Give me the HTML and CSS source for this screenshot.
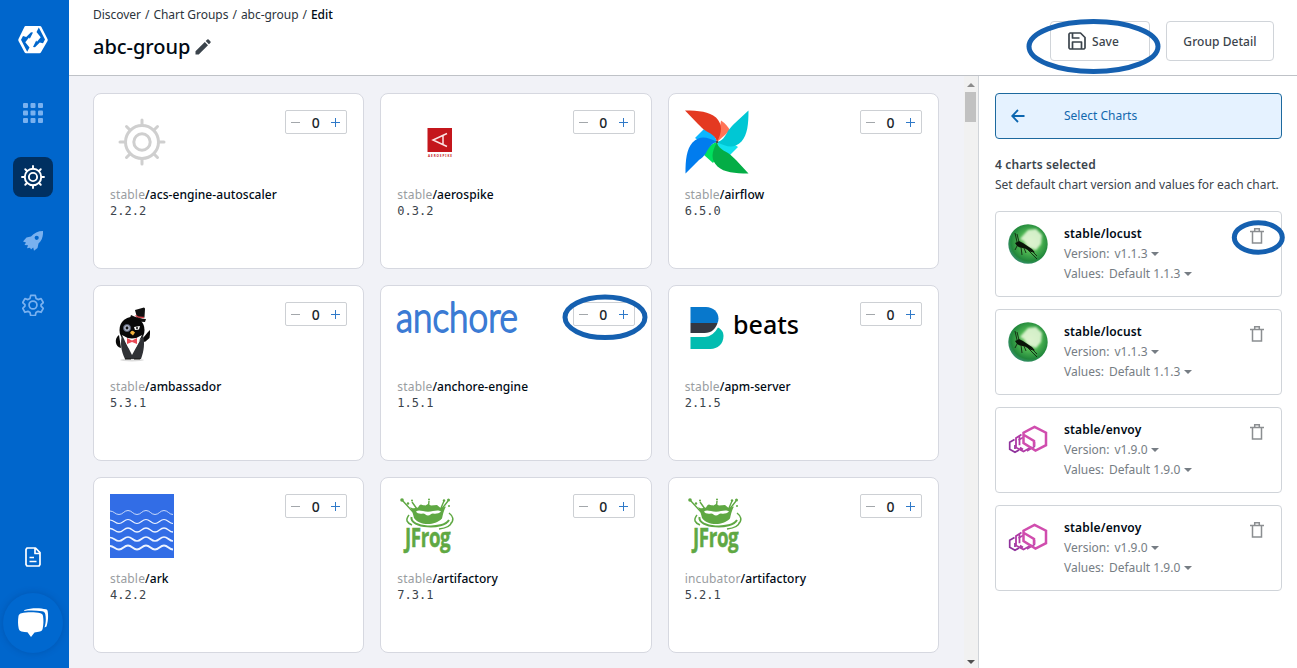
FILE: index.html
```html
<!DOCTYPE html>
<html lang="en">
<head>
<meta charset="utf-8">
<title>abc-group</title>
<link rel="stylesheet" href="styles.css">
</head>
<body>
<svg class="defs" width="0" height="0">
  <defs>
    <symbol id="helm" viewBox="0 0 48 48">
      <g fill="none" stroke="currentColor" stroke-linecap="round">
        <circle cx="24" cy="24" r="16.500"/>
        <circle cx="24" cy="24" r="8.200"/>
        <path d="M24 7V2M24 41v5M7 24H2M41 24h5M12 12L8.500 8.500M36 12l3.500-3.500M12 36l-3.500 3.500M36 36l3.500 3.500"/>
      </g>
    </symbol>
    <symbol id="trash" viewBox="0 0 14 18">
      <path fill="none" stroke="#8b8e91" stroke-width="1.500" d="M0 4.500h14M2.500 4.500v11.500h9V4.500M4.700 4.500V1.700h4.600v2.800"/>
    </symbol>
    <symbol id="locust" viewBox="0 0 40 40">
      <circle cx="20" cy="20" r="19.700" fill="url(#locustBall)"/>
      <path fill="#e3f6d6" opacity=".9" d="M12 15L20 6l8-1 6 6-1 9-5 6-8-3-4-6z" filter="url(#soft)"/>
      <path fill="#0a1408" d="M7 19l4-2 4 2 3 2 6 4 3 3.500-4-.5-6-3.500-5-1-3-1.500z"/>
      <path fill="none" stroke="#12260f" stroke-width=".9" d="M9 18L7 9M11 18l-2-8M13 23l1 8M16 24l2 5M20 26l9 9M23 26l6 6M9 22l-2 4"/>
    </symbol>
    <radialGradient id="locustBall" cx=".55" cy=".45" r=".6">
      <stop offset="0" stop-color="#a5dc8d"/><stop offset=".45" stop-color="#4db552"/>
      <stop offset=".8" stop-color="#22883b"/><stop offset="1" stop-color="#3d917c"/>
    </radialGradient>
    <filter id="soft"><feGaussianBlur stdDeviation="1.300"/></filter>
    <symbol id="envoy" viewBox="0 0 40 40">
      <g fill="none">
        <path stroke="#8f329c" stroke-width="1.700" d="M6.500 19.500L1.700 22.300v7L7 32.300l4-2.300M7 25v4"/>
        <path stroke="#b03aa5" stroke-width="1.800" d="M13.500 14.500L8 18v9.500l7.500 4 8-4.500M11.500 15.800v9.500M15 29.500l-3-2"/>
        <path stroke="#b142aa" stroke-width="1.500" d="M15 17.500l-4.500 2.500M26.500 22v4.500L19 31"/>
        <path stroke="#d04dae" stroke-width="2.500" d="M26.500 6.800L38 12.700v12.500L27.500 30.500 15.500 23V12.700zM16 15l10 6v5"/>
      </g>
    </symbol>
    <symbol id="frog" viewBox="0 0 64 64">
      <g fill="#5fa843">
        <path fill-rule="evenodd" d="M13 13c3 2 5 1 8 .5 1-2 2-3 3-3 2 1 3 .5 4.500 1l2.500-1.500 3 1.500c2 0 4-.5 6-.5l3 2.500c2 .5 4 0 6-1-2 3-3 8-4 12-4 4-9 5.500-14 5.500-6 0-11-2-14-6-1-4-2-8-4-11zM19 17.500c1 2 4 2.500 7 2 2 0 3 2 5 2s3-2 5-2c3 .5 6 0 8-2-2-1.500-5-1-8-.5-3 1-7 1-10 0-3-.5-5-1-7 .5z"/>
        <circle cx="5" cy="6" r="1.800"/><circle cx="11" cy="9.500" r="1.200"/><circle cx="15" cy="6.500" r="1"/><circle cx="32" cy="5.500" r="1"/><circle cx="47" cy="6.500" r="1.200"/><circle cx="51.500" cy="6" r="1.500"/><circle cx="52" cy="12" r="1"/>
      </g>
      <g fill="none" stroke="#5fa843">
        <path stroke-width="1.400" d="M5 6l11 12M15 8l5 7M32 7l-.5 5M51 7l-7 9M47 7l-3 7"/>
        <path stroke-width="2" d="M14.500 23c-2 11 32 13 37.500 3"/>
        <path stroke-width="1.500" d="M12 21c-4 5-2 8 3 10M42 35c8-1 12-3 12.500-7M52 19c4 3 5.500 7 1.500 11"/>
      </g>
      <text class="frog-word" transform="translate(8 53) scale(.72 1)">JFrog</text>
      <circle cx="53" cy="38" r=".6" fill="#5fa843"/>
    </symbol>
  </defs>
</svg>

<div class="app">
  <nav class="rail">
    <svg class="rail-logo" viewBox="0 0 30 28"><path fill="#fff" d="M7.500 0h14.500q.8 0 1.300.8L29.500 13q.5 1 0 2L23 26.300q-.5.900-1.500.900H8q-.8 0-1.300-.8L.5 15q-.5-1 0-2L6.500.8Q6.800 0 7.500 0z"/><path id="hook" fill="#0066cc" d="M20.800 1.600L27 13.600 25 17.300 21.800 16.500 17 21.200l-2-.3 3.200-6.300.8 1.200 3.700-4.600L18.500 6z"/><use href="#hook" transform="rotate(180 15 13.700)"/></svg>
    <svg class="rail-grid" viewBox="0 0 20 20" fill="#79b1ef"><rect width="5" height="5" rx="1"/><rect x="7.500" width="5" height="5" rx="1"/><rect x="15" width="5" height="5" rx="1"/><rect y="7.500" width="5" height="5" rx="1"/><rect x="7.500" y="7.500" width="5" height="5" rx="1"/><rect x="15" y="7.500" width="5" height="5" rx="1"/><rect y="15" width="5" height="5" rx="1"/><rect x="7.500" y="15" width="5" height="5" rx="1"/><rect x="15" y="15" width="5" height="5" rx="1"/></svg>
    <span class="rail-active"><svg viewBox="0 0 48 48"><use href="#helm"/></svg></span>
    <svg class="rail-rocket" viewBox="0 0 20 20"><path fill="#79b1ef" fill-rule="evenodd" d="M20 0c.3 5-1 9.500-4.500 12.500L14.500 17 11 19.700l-.8-3.200L8 18.500l-1-1.800-3 .6 1-3L1.500 14 3 11.500 0 10.600 3.500 6.500l4.500-1C11 2 15 0 20 0zm-6.300 4.700a2.100 2.100 0 1 0 0 4.200 2.100 2.100 0 0 0 0-4.200z"/></svg>
    <svg class="rail-gear" viewBox="0 0 24 24" fill="none" stroke="#79b1ef" stroke-width="1.900" stroke-linejoin="round"><circle cx="12" cy="12" r="4.300"/><path d="M9.500 1.500h5l.8 3.300 2.200 1.300 3.300-1 2.400 4.200-2.400 2.400v1.600l2.400 2.400-2.400 4.200-3.300-1-2.200 1.300-.8 3.300h-5l-.8-3.300-2.200-1.300-3.300 1-2.400-4.200 2.400-2.400v-1.600L.8 9.300l2.400-4.200 3.300 1 2.200-1.300z"/></svg>
    <svg class="rail-doc" viewBox="0 0 16 20" fill="none" stroke="#fff" stroke-width="1.700" stroke-linejoin="round"><path d="M2 1h8.500L15 5.700V17.500L14 19H2l-1-1.500V2.500zM10 1v5.500h5M4.500 10.500h4.500M4.500 14.500h7"/></svg>
    <span class="chat"><svg viewBox="0 0 32 30"><path fill="#fff" d="M7.500 2C14-.3 23-.3 29 1.300c1 .4 1.500 1 1.700 2C31.500 8.500 31 14 29.500 18.500l-2 1c1.500-5 1.600-9 .8-13.300C28 4.500 27 3.500 25 3.300 19 2.500 13 2.400 7 3z"/><path fill="#fff" d="M4.500 5.300C10 4 18 4 23.500 5.300c1.500.4 2.300 1.300 2.500 2.700.7 4.500.5 8.500-.3 12.500-.3 1.500-1 2.500-2.700 3-1.700.5-3.700.8-5.500.9L14 29l-3.500-4.700c-2 0-4-.3-6-.8-1.500-.4-2.500-1.500-2.800-3C.9 16.500.8 12.500 1.500 8 1.800 6.600 3 5.600 4.500 5.300z"/></svg></span>
  </nav>

  <div class="main">
    <header class="top">
      <div class="heading">
        <div class="crumbs"><span>Discover</span><i>/</i><span>Chart Groups</span><i>/</i><span>abc-group</span><i>/</i><b>Edit</b></div>
        <h1>abc-group<svg viewBox="0 0 16 16"><path fill="#3b444c" d="M.5 12.300L9.800 3l3.200 3.200-9.300 9.300H.5zM10.700 2.100L12.300.6q.7-.5 1.300 0l1.900 1.900q.5.600 0 1.300l-1.600 1.500z"/></svg></h1>
      </div>
      <div class="actions">
        <button class="btn save"><svg viewBox="0 0 18 18" fill="none" stroke="#3b444c" stroke-width="1.700" stroke-linejoin="round"><path d="M2 1h10.500L17 5.500V16l-1 1H2l-1-1V2zM4.500 17v-7h9v7M4.500 1v5h7"/></svg>Save</button>
        <button class="btn">Group Detail</button>
      </div>
    </header>

    <div class="body">
      <main class="charts">
        <article class="card">
          <div class="card-top"><svg class="logo gray" viewBox="-8 -8 64 64"><use href="#helm" width="48" height="48"/></svg><div class="stepper"><i class="minus"></i><span>0</span><i class="plus"></i></div></div>
          <h2><em>stable</em>/acs-engine-autoscaler</h2><p>2.2.2</p>
        </article>
        <article class="card">
          <div class="card-top"><svg class="logo wide" viewBox="0 0 86 64"><rect x="30.500" y="18" width="24.500" height="24" fill="#c4161c"/><path fill="none" stroke="#fbe3e3" stroke-width="1.500" d="M50 23.500L36 30l14 6.500M46 25.500v9"/><text class="aero" x="31" y="46.500" textLength="24">AEROSPIKE</text></svg><div class="stepper"><i class="minus"></i><span>0</span><i class="plus"></i></div></div>
          <h2><em>stable</em>/aerospike</h2><p>0.3.2</p>
        </article>
        <article class="card">
          <div class="card-top"><svg class="logo" viewBox="0 0 64 64"><path fill="#ff7457" d="M32 32L45 20.500q-3-6-9-10z"/><path fill="#11e1ee" d="M32 32c2 8 6 10 13 13l8-8-6-4z"/><path fill="#00e05e" d="M32 32c-7 2-10 6-13 13l9 8 4-6z"/><path fill="#0cb6ff" d="M32 32c-2-7-6-10-13-13l-9 9 6 4z"/><path fill="#e43921" d="M0 .5c14 0 24 1 31 7 7 7 6 15 1 24.500-1-5-5-8-11-11-3-2-5-4-8-7z"/><path fill="#00c7d4" d="M63.500.5c0 14-1 24-7 31-7 7-14 6-24.500.5 5-1 8-5 11-11 2-3 4-5 7-8z"/><path fill="#04ad46" d="M63.500 63.500c-14 0-24-1-31-7-7-7-6-14-.5-24.500 1 5 5 8 11 11 3 2 5 4 8 7z"/><path fill="#017cee" d="M.5 63.500c0-14 1-24 7-31 7-7 14-6 24.500-.5-5 1-8 5-11 11-2 3-4 5-7 7z"/><circle cx="32" cy="32" r="1.300" fill="#51504f"/></svg><div class="stepper"><i class="minus"></i><span>0</span><i class="plus"></i></div></div>
          <h2><em>stable</em>/airflow</h2><p>6.5.0</p>
        </article>

        <article class="card">
          <div class="card-top"><svg class="logo" viewBox="0 0 64 64"><ellipse cx="22" cy="58" rx="12" ry="1.500" fill="#ddd"/><path fill="#111" d="M25 8l9-2.500 1 1-.5 9-7 2z"/><path fill="#111" d="M21 13c4 2 10 4 15 4l-1 3c-5 0-11-1-15-4z"/><path fill="none" stroke="#d5424a" stroke-width="1.500" d="M25.500 13.500q3 2.500 8.500 2"/><ellipse cx="22" cy="28" rx="12.500" ry="13" fill="#080808"/><path fill="#090909" d="M9 33c-5 3-4 12 2 13zM33 36l5-6 2-2v4l-.5 4-4 3.500-4 1z"/><path fill="#303236" d="M12 33l10 20 11-20c2 8 1 16-2 24H15C11 49 10 41 12 33z"/><path fill="#fff" d="M12 33q10 7 20 0l-6 12-4 4-4-4z"/><path fill="#e94b57" d="M17 36l5 2.500 5-2.500v6l-5-2-5 2z"/><circle cx="17" cy="26" r="3.500" fill="#aeb5c8" stroke="#555c70"/><circle cx="17" cy="26" r="1.400" fill="#111"/><path fill="#fff" d="M24 25l6-1-1 3.500-4 .5z"/><circle cx="27" cy="26" r="1" fill="#111"/><path fill="#f4b43f" d="M20 31q2-4 5-.5l-2 3z"/><path fill="#222" d="M15 56h6v1.500h-6zM24 56h6v1.500h-6z"/></svg><div class="stepper"><i class="minus"></i><span>0</span><i class="plus"></i></div></div>
          <h2><em>stable</em>/ambassador</h2><p>5.3.1</p>
        </article>
        <article class="card">
          <div class="card-top"><svg class="logo anchore" viewBox="0 0 122 64"><text x="-1" y="30" textLength="122" lengthAdjust="spacingAndGlyphs">anchore</text></svg><div class="stepper"><i class="minus"></i><span>0</span><i class="plus"></i></div></div>
          <h2><em>stable</em>/anchore-engine</h2><p>1.5.1</p>
        </article>
        <article class="card">
          <div class="card-top"><svg class="logo beats" viewBox="0 0 122 64"><path fill="#0878cc" d="M5.500 5H21c7 0 12.500 5 12.500 11.500q0 2.500-1 4.500h-27z"/><path fill="#343741" d="M5.500 21h27c-2 6-6 10-13 10h-14z"/><path fill="#02bcb0" d="M5.500 35H20q8-.5 13-9.500c4 2 5.500 5 5.500 8.500 0 8-6 13-13 13h-20z"/><text x="48" y="32" textLength="66" lengthAdjust="spacingAndGlyphs">beats</text></svg><div class="stepper"><i class="minus"></i><span>0</span><i class="plus"></i></div></div>
          <h2><em>stable</em>/apm-server</h2><p>2.1.5</p>
        </article>

        <article class="card">
          <div class="card-top"><svg class="logo" viewBox="0 0 64 64"><path fill="#326de6" d="M0 0h64v64H0z"/><g fill="none" stroke="#eef4ff"><path stroke-width=".8" d="M0 17c4 0 5 3.500 9 3.500s5-4 9-4 5 4 9 4 5-4 9-4 5 4 9 4 5-4 9-4 5 4 9 4"/><path stroke-width="1.100" d="M0 26c4 0 5 3.500 9 3.500s5-4 9-4 5 4 9 4 5-4 9-4 5 4 9 4 5-4 9-4 5 4 9 4"/><path stroke-width="1.500" d="M0 34.500c4 0 5 3.500 9 3.500s5-4 9-4 5 4 9 4 5-4 9-4 5 4 9 4 5-4 9-4 5 4 9 4"/><path stroke-width="1.700" d="M0 43.500c4 0 5 3.500 9 3.500s5-4 9-4 5 4 9 4 5-4 9-4 5 4 9 4 5-4 9-4 5 4 9 4"/><path stroke-width="2" d="M0 52c4 0 5 3.500 9 3.500s5-4 9-4 5 4 9 4 5-4 9-4 5 4 9 4 5-4 9-4 5 4 9 4"/></g></svg><div class="stepper"><i class="minus"></i><span>0</span><i class="plus"></i></div></div>
          <h2><em>stable</em>/ark</h2><p>4.2.2</p>
        </article>
        <article class="card">
          <div class="card-top"><svg class="logo" viewBox="0 0 64 64"><use href="#frog"/></svg><div class="stepper"><i class="minus"></i><span>0</span><i class="plus"></i></div></div>
          <h2><em>stable</em>/artifactory</h2><p>7.3.1</p>
        </article>
        <article class="card">
          <div class="card-top"><svg class="logo" viewBox="0 0 64 64"><use href="#frog"/></svg><div class="stepper"><i class="minus"></i><span>0</span><i class="plus"></i></div></div>
          <h2><em>incubator</em>/artifactory</h2><p>5.2.1</p>
        </article>
      </main>

      <div class="scrollbar"><i class="up"></i><i class="thumb"></i><i class="down"></i></div>

      <aside class="panel">
        <button class="select"><svg viewBox="0 0 14 14"><path fill="none" stroke="#0b66b0" stroke-width="1.800" d="M13.500 7H1.500M7 1L1.200 7 7 13"/></svg>Select Charts</button>
        <h3>4 charts selected</h3>
        <p class="hint">Set default chart version and values for each chart.</p>
        <div class="picked">
          <section class="pick"><svg class="pick-logo"><use href="#locust"/></svg><div><h4>stable/locust</h4><p>Version:<span>v1.1.3</span></p><p>Values:<span>Default 1.1.3</span></p></div><svg class="trash"><use href="#trash"/></svg></section>
          <section class="pick"><svg class="pick-logo"><use href="#locust"/></svg><div><h4>stable/locust</h4><p>Version:<span>v1.1.3</span></p><p>Values:<span>Default 1.1.3</span></p></div><svg class="trash"><use href="#trash"/></svg></section>
          <section class="pick"><svg class="pick-logo"><use href="#envoy"/></svg><div><h4>stable/envoy</h4><p>Version:<span>v1.9.0</span></p><p>Values:<span>Default 1.9.0</span></p></div><svg class="trash"><use href="#trash"/></svg></section>
          <section class="pick"><svg class="pick-logo"><use href="#envoy"/></svg><div><h4>stable/envoy</h4><p>Version:<span>v1.9.0</span></p><p>Values:<span>Default 1.9.0</span></p></div><svg class="trash"><use href="#trash"/></svg></section>
        </div>
      </aside>
    </div>
  </div>
</div>
<svg class="marks" viewBox="0 0 1297 668">
  <ellipse cx="1093.500" cy="46.500" rx="64.500" ry="25"/>
  <ellipse cx="605" cy="317.300" rx="40" ry="20.300"/>
  <ellipse cx="1258.300" cy="237.500" rx="24" ry="14.700"/>
</svg>
</body>
</html>
```

FILE: styles.css
```css
* { box-sizing: border-box; }
body { margin: 0; font-family: "Noto Sans", "Open Sans", sans-serif; font-size: 12px; color: #3b444c; overflow: hidden; }
h1, h2, h3, h4, p { margin: 0; }
i, em { font-style: normal; }
svg { display: block; flex: none; }
button { font: inherit; }
.defs { position: absolute; }

.app { display: flex; height: 668px; }

/* navigation rail */
.rail { width: 69px; flex: none; background: #0066cc; display: flex; flex-direction: column; align-items: center; padding: 26px 4px 15px 0; }
.rail-logo { width: 30px; height: 28px; }
.rail-grid { width: 20px; height: 20px; margin-top: 49px; }
.rail-active { width: 40px; height: 40px; margin-top: 34px; border-radius: 8px; background: #003061; color: #fff; display: grid; place-items: center; }
.rail-active svg { width: 24px; height: 24px; stroke-width: 3.8px; }
.rail-rocket { width: 20px; height: 20px; margin-top: 34px; }
.rail-gear { width: 22px; height: 22px; margin-top: 43px; }
.rail-doc { width: 16px; height: 20px; margin-top: auto; }
.chat { width: 60px; height: 60px; margin-top: 26px; border-radius: 50%; background: #0068cf; box-shadow: 0 0 7px rgba(0, 40, 100, .25); display: grid; place-items: center; }
.chat svg { width: 32px; height: 30px; }

.main { flex: 1; min-width: 0; display: flex; flex-direction: column; }

/* header */
.top { height: 76px; flex: none; border-bottom: 1px solid #bfc2c7; display: flex; justify-content: space-between; padding: 6px 23px 0 24px; background: #fff; }
.crumbs { display: flex; gap: 4px; line-height: 17px; letter-spacing: -.03px; color: #2c343c; }
.crumbs b { font-weight: 500; color: #000a14; }
h1 { display: flex; align-items: center; gap: 5px; margin-top: 11px; font-size: 20px; line-height: 26px; font-weight: 500; letter-spacing: -.05px; color: #000a14; }
h1 svg { width: 16px; height: 16px; }
.actions { display: flex; gap: 16px; padding-top: 15px; }
.btn { width: 108px; height: 40px; padding: 0; background: #fff; border: 1px solid #d0d4d9; border-radius: 4px; font-weight: 500; letter-spacing: .06px; color: #3b444c; }
.save { width: 100px; display: flex; align-items: center; gap: 6px; padding-left: 17px; }
.save svg { width: 18px; height: 18px; }

.body { flex: 1; min-height: 0; display: flex; }

/* chart grid */
.charts { flex: 1; min-width: 0; background: #f1f2f7; display: grid; grid-template-columns: repeat(3, 1fr); grid-auto-rows: 176px; gap: 16px; padding: 17px 25px 0 24px; overflow: hidden; }
.card { background: #fff; border: 1px solid #d6d8e0; border-radius: 8px; padding: 16px; }
.card-top { display: flex; justify-content: space-between; align-items: flex-start; height: 64px; }
.logo { width: 64px; height: 64px; overflow: visible; }
.wide { width: 86px; }
.gray { color: #cfcfcf; stroke-width: 3px; }
.anchore, .beats { width: 122px; }
.anchore text { font: 300 41px Lato, sans-serif; fill: #3b7bd4; stroke: #3b7bd4; stroke-width: 1.8px; stroke-linejoin: round; }
.beats text { font: 500 25px "Noto Sans", sans-serif; fill: #000; }
.aero { font: 700 3px "Noto Sans", sans-serif; fill: #c4161c; }
.frog-word { font: 700 26px "Open Sans", sans-serif; fill: #5fa843; stroke: #5fa843; stroke-width: .5px; letter-spacing: -.5px; }
.card h2 { margin-top: 12px; font-size: 12px; line-height: 17px; font-weight: 500; letter-spacing: .06px; color: #000a14; }
.card em { font-weight: 400; letter-spacing: .17px; color: #999da1; }
.card p { font: 12px/16px "DejaVu Sans Mono", monospace; color: #3b444c; }
.stepper { width: 62px; height: 24px; border: 1px solid #cdd0d4; border-radius: 2px; display: flex; align-items: center; justify-content: space-between; padding: 0 6px 0 5px; font-size: 14px; font-weight: 500; line-height: 23px; color: #20262c; }
.minus { width: 9px; height: 1px; background: #a3a7ab; }
.plus { width: 9px; height: 9px; background: linear-gradient(#2f79c8, #2f79c8) center / 9px 1px no-repeat, linear-gradient(#2f79c8, #2f79c8) center / 1px 9px no-repeat; }

/* scrollbar */
.scrollbar { width: 14px; background: #f1f1f1; display: flex; flex-direction: column; align-items: center; padding: 7px 1px 4px 0; }
.up, .down { border: 4px solid transparent; border-top: 0; border-bottom-color: #8b8b8b; }
.down { border-top: 4px solid #505050; border-bottom: 0; margin-top: auto; }
.thumb { width: 11px; height: 30px; margin-top: 5px; background: #c1c1c1; }

/* selection panel */
.panel { width: 319px; flex: none; border-left: 1px solid #d0d4d9; background: #fff; padding: 17px 15px 0 16px; }
.select { width: 100%; height: 46px; display: flex; align-items: center; gap: 39px; padding: 0 0 1px 15px; border: 1px solid #1c699e; border-radius: 4px; background: #e5f2ff; color: #1268ae; }
.select svg { width: 14px; height: 14px; }
h3 { margin-top: 16px; font-size: 12px; line-height: 20px; font-weight: 600; letter-spacing: .13px; }
.hint { line-height: 20px; letter-spacing: -.04px; white-space: nowrap; }
.picked { display: flex; flex-direction: column; gap: 12px; margin-top: 16px; }
.pick { display: flex; height: 86px; border: 1px solid #d0d4d9; border-radius: 4px; padding: 12px 17px 0 12px; }
.pick > div { flex: 1; padding-left: 16px; }
.pick-logo { width: 40px; height: 40px; }
.pick h4 { font-size: 12px; line-height: 20px; font-weight: 600; letter-spacing: .16px; color: #000a14; }
.pick p { display: flex; align-items: center; gap: 5px; line-height: 20px; color: #767d84; }
.pick p::after { content: ""; border: 4px solid transparent; border-top-color: #767d84; border-bottom: 0; margin-left: -1.5px; }
.trash { width: 14px; height: 18px; margin-top: 3px; }

.marks { position: absolute; inset: 0; width: 1297px; height: 668px; fill: none; stroke: #1560b0; stroke-width: 5px; pointer-events: none; }
```
